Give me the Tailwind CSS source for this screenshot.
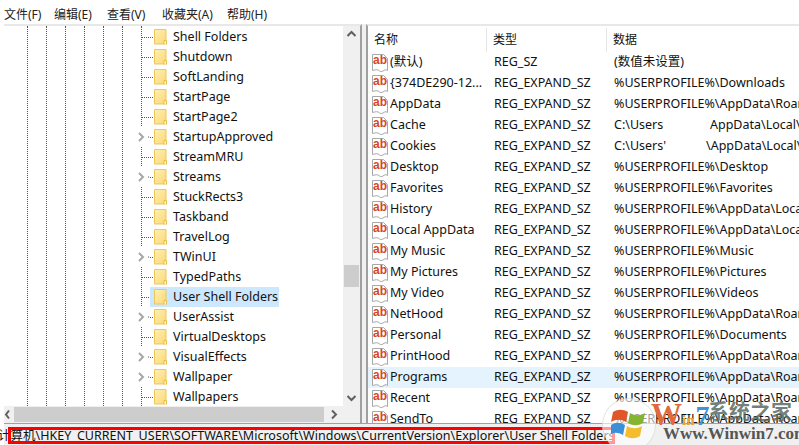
<!DOCTYPE html>
<html lang="zh">
<head>
<meta charset="utf-8">
<script src="https://cdn.jsdelivr.net/npm/@tailwindcss/browser@4"></script>
</head>
<body class="bg-white">
<svg class="absolute w-0 h-0">
  <defs>
    <linearGradient id="fg" x1="0" y1="0" x2="1" y2="1"><stop offset="0" stop-color="#fff0b4"/><stop offset="1" stop-color="#fbd873"/></linearGradient>
    <symbol id="folder" viewBox="0 0 13 16">
      <path d="M.5.5h11.500v14.500H.5z" fill="url(#fg)" stroke="#eec65a"/>
      <path d="M10 15.500v-4h2.500v4" fill="#fff3c8" stroke="#e8bc48"/>
    </symbol>
    <symbol id="ab" viewBox="0 0 16 18">
      <path d="M.5.5h11l4 4v12c-2-1.500-3-.5-4.500.5s-3 .5-4-.5-3-1-6.500 0z" fill="#fff" stroke="#a8a8a8"/>
      <text x="8" y="10" text-anchor="middle" font-family="Liberation Sans" font-size="12" font-weight="700" fill="#d4472a">ab</text>
    </symbol>
  </defs>
</svg>
<div class="relative w-[799px] h-[445px] overflow-hidden flex flex-col bg-white text-[12.5px] text-[#111] font-['Noto_Sans','Noto_Sans_CJK_SC',sans-serif] leading-none">

  <nav class="h-[24px] shrink-0 flex items-center pl-[4px] pt-[6px] text-[12px] text-[#222]">
    <span class="w-[50px]">文件(F)</span>
    <span class="w-[53px]">编辑(E)</span>
    <span class="w-[55px]">查看(V)</span>
    <span class="w-[65px]">收藏夹(A)</span>
    <span>帮助(H)</span>
  </nav>

  <main class="flex flex-1 min-h-0 ml-[4px] bg-[#f0f0f0]">
    <section class="w-[358px] shrink-0 flex flex-col bg-white border-t-2 border-[#e8e8e8] border-r-2 border-r-[#a0a0a0]">
      <div class="flex flex-1 min-h-0">
        <div class="relative flex-1 min-w-0 overflow-hidden pt-[1px]">
          <div class="absolute inset-y-0 left-[23px] flex gap-[18px]">
            <i class="border-l border-dotted border-[#555]"></i><i class="border-l border-dotted border-[#555]"></i><i class="border-l border-dotted border-[#555]"></i><i class="border-l border-dotted border-[#555]"></i><i class="border-l border-dotted border-[#555]"></i><i class="border-l border-dotted border-[#555]"></i><i class="border-l border-dotted border-[#555]"></i>
          </div>
          <ul class="relative pl-[137px]">
            <li class="h-5 flex items-center"><i class="w-[12px] border-t border-dotted border-[#555]"></i><svg class="w-[13px] h-[16px] ml-[1px]"><use href="#folder"/></svg><span class="ml-[6px]">Shell Folders</span></li>
            <li class="h-5 flex items-center"><i class="w-[12px] border-t border-dotted border-[#555]"></i><svg class="w-[13px] h-[16px] ml-[1px]"><use href="#folder"/></svg><span class="ml-[6px]">Shutdown</span></li>
            <li class="h-5 flex items-center"><i class="w-[12px] border-t border-dotted border-[#555]"></i><svg class="w-[13px] h-[16px] ml-[1px]"><use href="#folder"/></svg><span class="ml-[6px]">SoftLanding</span></li>
            <li class="h-5 flex items-center"><i class="w-[12px] border-t border-dotted border-[#555]"></i><svg class="w-[13px] h-[16px] ml-[1px]"><use href="#folder"/></svg><span class="ml-[6px]">StartPage</span></li>
            <li class="h-5 flex items-center"><i class="w-[12px] border-t border-dotted border-[#555]"></i><svg class="w-[13px] h-[16px] ml-[1px]"><use href="#folder"/></svg><span class="ml-[6px]">StartPage2</span></li>
            <li class="h-5 flex items-center"><svg class="w-[12px] h-[20px] -ml-[3px] bg-white" viewBox="0 0 12 20"><path d="M1 6l4 4-4 4" fill="none" stroke="#a6a6a6" stroke-width="2"/><path d="M10 10h1" stroke="#555"/></svg><i class="w-[3px] border-t border-dotted border-[#555]"></i><svg class="w-[13px] h-[16px] ml-[1px]"><use href="#folder"/></svg><span class="ml-[6px]">StartupApproved</span></li>
            <li class="h-5 flex items-center"><i class="w-[12px] border-t border-dotted border-[#555]"></i><svg class="w-[13px] h-[16px] ml-[1px]"><use href="#folder"/></svg><span class="ml-[6px]">StreamMRU</span></li>
            <li class="h-5 flex items-center"><svg class="w-[12px] h-[20px] -ml-[3px] bg-white" viewBox="0 0 12 20"><path d="M1 6l4 4-4 4" fill="none" stroke="#a6a6a6" stroke-width="2"/><path d="M10 10h1" stroke="#555"/></svg><i class="w-[3px] border-t border-dotted border-[#555]"></i><svg class="w-[13px] h-[16px] ml-[1px]"><use href="#folder"/></svg><span class="ml-[6px]">Streams</span></li>
            <li class="h-5 flex items-center"><i class="w-[12px] border-t border-dotted border-[#555]"></i><svg class="w-[13px] h-[16px] ml-[1px]"><use href="#folder"/></svg><span class="ml-[6px]">StuckRects3</span></li>
            <li class="h-5 flex items-center"><i class="w-[12px] border-t border-dotted border-[#555]"></i><svg class="w-[13px] h-[16px] ml-[1px]"><use href="#folder"/></svg><span class="ml-[6px]">Taskband</span></li>
            <li class="h-5 flex items-center"><i class="w-[12px] border-t border-dotted border-[#555]"></i><svg class="w-[13px] h-[16px] ml-[1px]"><use href="#folder"/></svg><span class="ml-[6px]">TravelLog</span></li>
            <li class="h-5 flex items-center"><svg class="w-[12px] h-[20px] -ml-[3px] bg-white" viewBox="0 0 12 20"><path d="M1 6l4 4-4 4" fill="none" stroke="#a6a6a6" stroke-width="2"/><path d="M10 10h1" stroke="#555"/></svg><i class="w-[3px] border-t border-dotted border-[#555]"></i><svg class="w-[13px] h-[16px] ml-[1px]"><use href="#folder"/></svg><span class="ml-[6px]">TWinUI</span></li>
            <li class="h-5 flex items-center"><i class="w-[12px] border-t border-dotted border-[#555]"></i><svg class="w-[13px] h-[16px] ml-[1px]"><use href="#folder"/></svg><span class="ml-[6px]">TypedPaths</span></li>
            <li class="h-5 flex items-center"><i class="w-[12px] border-t border-dotted border-[#555]"></i><div class="flex items-center h-5 bg-[#cce8ff] -ml-[3px] pl-[4px] pr-[1px]"><svg class="w-[13px] h-[16px]"><use href="#folder"/></svg><span class="ml-[6px]">User Shell Folders</span></div></li>
            <li class="h-5 flex items-center"><svg class="w-[12px] h-[20px] -ml-[3px] bg-white" viewBox="0 0 12 20"><path d="M1 6l4 4-4 4" fill="none" stroke="#a6a6a6" stroke-width="2"/><path d="M10 10h1" stroke="#555"/></svg><i class="w-[3px] border-t border-dotted border-[#555]"></i><svg class="w-[13px] h-[16px] ml-[1px]"><use href="#folder"/></svg><span class="ml-[6px]">UserAssist</span></li>
            <li class="h-5 flex items-center"><i class="w-[12px] border-t border-dotted border-[#555]"></i><svg class="w-[13px] h-[16px] ml-[1px]"><use href="#folder"/></svg><span class="ml-[6px]">VirtualDesktops</span></li>
            <li class="h-5 flex items-center"><svg class="w-[12px] h-[20px] -ml-[3px] bg-white" viewBox="0 0 12 20"><path d="M1 6l4 4-4 4" fill="none" stroke="#a6a6a6" stroke-width="2"/><path d="M10 10h1" stroke="#555"/></svg><i class="w-[3px] border-t border-dotted border-[#555]"></i><svg class="w-[13px] h-[16px] ml-[1px]"><use href="#folder"/></svg><span class="ml-[6px]">VisualEffects</span></li>
            <li class="h-5 flex items-center"><svg class="w-[12px] h-[20px] -ml-[3px] bg-white" viewBox="0 0 12 20"><path d="M1 6l4 4-4 4" fill="none" stroke="#a6a6a6" stroke-width="2"/><path d="M10 10h1" stroke="#555"/></svg><i class="w-[3px] border-t border-dotted border-[#555]"></i><svg class="w-[13px] h-[16px] ml-[1px]"><use href="#folder"/></svg><span class="ml-[6px]">Wallpaper</span></li>
            <li class="h-5 flex items-center"><i class="w-[12px] border-t border-dotted border-[#555]"></i><svg class="w-[13px] h-[16px] ml-[1px]"><use href="#folder"/></svg><span class="ml-[6px]">Wallpapers</span></li>
          </ul>
        </div>
        <div class="w-[17px] shrink-0 flex flex-col items-center bg-[#f0f0f0]">
          <svg class="w-[17px] h-[17px] shrink-0" viewBox="0 0 17 17"><path d="M4.500 10l4-4 4 4" fill="none" stroke="#606060" stroke-width="2"/></svg>
          <div class="flex-1 w-full pt-[222px]"><div class="h-[22px] w-[15px] mx-auto bg-[#cdcdcd]"></div></div>
          <svg class="w-[17px] h-[17px] shrink-0" viewBox="0 0 17 17"><path d="M4.500 7l4 4 4-4" fill="none" stroke="#606060" stroke-width="2"/></svg>
        </div>
      </div>
      <div class="h-[17px] shrink-0 flex items-center bg-[#f0f0f0]">
        <svg class="w-[10px] h-[17px] shrink-0" viewBox="0 0 10 17"><path d="M5 4.500l-3 4 3 4" fill="none" stroke="#606060" stroke-width="2"/></svg>
        <div class="w-[310px] h-[15px] bg-[#cdcdcd]"></div>
        <div class="flex-1"></div>
        <svg class="w-[17px] h-[17px] shrink-0 mr-[17px]" viewBox="0 0 17 17"><path d="M6 4.500l4 4-4 4" fill="none" stroke="#606060" stroke-width="2"/></svg>
      </div>
    </section>

    <section class="ml-[4px] flex-1 min-w-0 bg-white border-t-2 border-t-[#e8e8e8] border-l-2 border-l-[#a0a0a0] overflow-hidden">
      <header class="h-[26px] flex items-center text-[12px] pt-[2px]">
        <span class="w-[119px] shrink-0 h-full pl-[6px] flex items-center border-r border-[#e5e5e5]">名称</span>
        <span class="w-[120px] shrink-0 h-full pl-[6px] flex items-center border-r border-[#e5e5e5]">类型</span>
        <span class="pl-[6px]">数据</span>
      </header>
      <ul>
        <li class="h-[21px] flex items-center whitespace-nowrap"><div class="w-[119px] shrink-0 flex items-center pl-[4px] overflow-hidden"><svg class="w-[16px] h-[18px] shrink-0"><use href="#ab"/></svg><span class="ml-[2px]">(默认)</span></div><span class="w-[120px] shrink-0 pl-[7px]">REG_SZ</span><span class="pl-[7px]">(数值未设置)</span></li>
        <li class="h-[21px] flex items-center whitespace-nowrap"><div class="w-[119px] shrink-0 flex items-center pl-[4px] overflow-hidden"><svg class="w-[16px] h-[18px] shrink-0"><use href="#ab"/></svg><span class="ml-[2px]">{374DE290-12...</span></div><span class="w-[120px] shrink-0 pl-[7px]">REG_EXPAND_SZ</span><span class="pl-[7px]">%USERPROFILE%\Downloads</span></li>
        <li class="h-[21px] flex items-center whitespace-nowrap"><div class="w-[119px] shrink-0 flex items-center pl-[4px] overflow-hidden"><svg class="w-[16px] h-[18px] shrink-0"><use href="#ab"/></svg><span class="ml-[2px]">AppData</span></div><span class="w-[120px] shrink-0 pl-[7px]">REG_EXPAND_SZ</span><span class="pl-[7px]">%USERPROFILE%\AppData\Roaming</span></li>
        <li class="h-[21px] flex items-center whitespace-nowrap"><div class="w-[119px] shrink-0 flex items-center pl-[4px] overflow-hidden"><svg class="w-[16px] h-[18px] shrink-0"><use href="#ab"/></svg><span class="ml-[2px]">Cache</span></div><span class="w-[120px] shrink-0 pl-[7px]">REG_EXPAND_SZ</span><span class="pl-[7px] w-[103px] shrink-0">C:\Users</span><span>AppData\Local\Microsoft</span></li>
        <li class="h-[21px] flex items-center whitespace-nowrap"><div class="w-[119px] shrink-0 flex items-center pl-[4px] overflow-hidden"><svg class="w-[16px] h-[18px] shrink-0"><use href="#ab"/></svg><span class="ml-[2px]">Cookies</span></div><span class="w-[120px] shrink-0 pl-[7px]">REG_EXPAND_SZ</span><span class="pl-[7px] w-[99px] shrink-0">C:\Users'</span><span>\AppData\Local\Microsoft</span></li>
        <li class="h-[21px] flex items-center whitespace-nowrap"><div class="w-[119px] shrink-0 flex items-center pl-[4px] overflow-hidden"><svg class="w-[16px] h-[18px] shrink-0"><use href="#ab"/></svg><span class="ml-[2px]">Desktop</span></div><span class="w-[120px] shrink-0 pl-[7px]">REG_EXPAND_SZ</span><span class="pl-[7px]">%USERPROFILE%\Desktop</span></li>
        <li class="h-[21px] flex items-center whitespace-nowrap"><div class="w-[119px] shrink-0 flex items-center pl-[4px] overflow-hidden"><svg class="w-[16px] h-[18px] shrink-0"><use href="#ab"/></svg><span class="ml-[2px]">Favorites</span></div><span class="w-[120px] shrink-0 pl-[7px]">REG_EXPAND_SZ</span><span class="pl-[7px]">%USERPROFILE%\Favorites</span></li>
        <li class="h-[21px] flex items-center whitespace-nowrap"><div class="w-[119px] shrink-0 flex items-center pl-[4px] overflow-hidden"><svg class="w-[16px] h-[18px] shrink-0"><use href="#ab"/></svg><span class="ml-[2px]">History</span></div><span class="w-[120px] shrink-0 pl-[7px]">REG_EXPAND_SZ</span><span class="pl-[7px]">%USERPROFILE%\AppData\Local</span></li>
        <li class="h-[21px] flex items-center whitespace-nowrap"><div class="w-[119px] shrink-0 flex items-center pl-[4px] overflow-hidden"><svg class="w-[16px] h-[18px] shrink-0"><use href="#ab"/></svg><span class="ml-[2px]">Local AppData</span></div><span class="w-[120px] shrink-0 pl-[7px]">REG_EXPAND_SZ</span><span class="pl-[7px]">%USERPROFILE%\AppData\Local</span></li>
        <li class="h-[21px] flex items-center whitespace-nowrap"><div class="w-[119px] shrink-0 flex items-center pl-[4px] overflow-hidden"><svg class="w-[16px] h-[18px] shrink-0"><use href="#ab"/></svg><span class="ml-[2px]">My Music</span></div><span class="w-[120px] shrink-0 pl-[7px]">REG_EXPAND_SZ</span><span class="pl-[7px]">%USERPROFILE%\Music</span></li>
        <li class="h-[21px] flex items-center whitespace-nowrap"><div class="w-[119px] shrink-0 flex items-center pl-[4px] overflow-hidden"><svg class="w-[16px] h-[18px] shrink-0"><use href="#ab"/></svg><span class="ml-[2px]">My Pictures</span></div><span class="w-[120px] shrink-0 pl-[7px]">REG_EXPAND_SZ</span><span class="pl-[7px]">%USERPROFILE%\Pictures</span></li>
        <li class="h-[21px] flex items-center whitespace-nowrap"><div class="w-[119px] shrink-0 flex items-center pl-[4px] overflow-hidden"><svg class="w-[16px] h-[18px] shrink-0"><use href="#ab"/></svg><span class="ml-[2px]">My Video</span></div><span class="w-[120px] shrink-0 pl-[7px]">REG_EXPAND_SZ</span><span class="pl-[7px]">%USERPROFILE%\Videos</span></li>
        <li class="h-[21px] flex items-center whitespace-nowrap"><div class="w-[119px] shrink-0 flex items-center pl-[4px] overflow-hidden"><svg class="w-[16px] h-[18px] shrink-0"><use href="#ab"/></svg><span class="ml-[2px]">NetHood</span></div><span class="w-[120px] shrink-0 pl-[7px]">REG_EXPAND_SZ</span><span class="pl-[7px]">%USERPROFILE%\AppData\Roaming</span></li>
        <li class="h-[21px] flex items-center whitespace-nowrap"><div class="w-[119px] shrink-0 flex items-center pl-[4px] overflow-hidden"><svg class="w-[16px] h-[18px] shrink-0"><use href="#ab"/></svg><span class="ml-[2px]">Personal</span></div><span class="w-[120px] shrink-0 pl-[7px]">REG_EXPAND_SZ</span><span class="pl-[7px]">%USERPROFILE%\Documents</span></li>
        <li class="h-[21px] flex items-center whitespace-nowrap"><div class="w-[119px] shrink-0 flex items-center pl-[4px] overflow-hidden"><svg class="w-[16px] h-[18px] shrink-0"><use href="#ab"/></svg><span class="ml-[2px]">PrintHood</span></div><span class="w-[120px] shrink-0 pl-[7px]">REG_EXPAND_SZ</span><span class="pl-[7px]">%USERPROFILE%\AppData\Roaming</span></li>
        <li class="h-[21px] flex items-center whitespace-nowrap bg-[#e5f3ff]"><div class="w-[119px] shrink-0 flex items-center pl-[4px] overflow-hidden"><svg class="w-[16px] h-[18px] shrink-0"><use href="#ab"/></svg><span class="ml-[2px]">Programs</span></div><span class="w-[120px] shrink-0 pl-[7px]">REG_EXPAND_SZ</span><span class="pl-[7px]">%USERPROFILE%\AppData\Roaming</span></li>
        <li class="h-[21px] flex items-center whitespace-nowrap"><div class="w-[119px] shrink-0 flex items-center pl-[4px] overflow-hidden"><svg class="w-[16px] h-[18px] shrink-0"><use href="#ab"/></svg><span class="ml-[2px]">Recent</span></div><span class="w-[120px] shrink-0 pl-[7px]">REG_EXPAND_SZ</span><span class="pl-[7px]">%USERPROFILE%\AppData\Roaming</span></li>
        <li class="h-[21px] flex items-center whitespace-nowrap"><div class="w-[119px] shrink-0 flex items-center pl-[4px] overflow-hidden"><svg class="w-[16px] h-[18px] shrink-0"><use href="#ab"/></svg><span class="ml-[2px]">SendTo</span></div><span class="w-[120px] shrink-0 pl-[7px]">REG_EXPAND_SZ</span><span class="pl-[7px]">%USERPROFILE%\AppData\Roaming</span></li>
      </ul>
    </section>
  </main>

  <footer class="h-[22px] shrink-0 ml-[4px] flex items-center bg-[#f0f0f0] border-t border-[#a0a0a0] whitespace-nowrap pt-[4px] text-[12.5px] tracking-[0.02px]">
    <span class="-ml-[6px]">计算机\HKEY_CURRENT_USER\SOFTWARE\Microsoft\Windows\CurrentVersion\Explorer\User Shell Folders</span>
  </footer>

  <div class="absolute left-[8px] top-[427px] w-[607px] h-[17px] border-[3px] border-[#ff0000]"></div>

  <div class="absolute left-[600px] top-[396px] w-[199px] h-[49px] overflow-hidden">
    <div class="absolute left-[2px] top-[2px] w-[54px] h-[54px] rounded-full bg-white/60 border border-[#d0d0d0]/60"></div>
    <svg class="absolute left-[11px] top-[11px] w-[36px] h-[32px]" viewBox="0 0 36 32">
      <path d="M2 5c5-3 10-3 15 0l-2 10c-5-3-10-3-15 0z" fill="#e0552a"/>
      <path d="M19 6c5 3 10 3 15 0l-2 10c-5 3-10 3-15 0z" fill="#84b530"/>
      <path d="M0 18c5-3 9-3 14 0l-2 10c-5-3-9-3-14 0z" fill="#3a8fd8"/>
      <path d="M16 19c5 3 10 3 15 0l-2 10c-5 3-10 3-15 0z" fill="#f3bd2e"/>
    </svg>
    <div class="absolute left-[51px] top-[3px] flex items-baseline font-['Liberation_Serif'] font-bold leading-none">
      <span class="text-[31px] text-[#e06a3c]">W</span><span class="text-[15px] text-[#e8a33a]">in</span><span class="text-[28px] text-[#3f93d6] ml-[1px]">7</span>
    </div>
    <span class="absolute left-[108px] top-[4px] text-[21px] leading-none font-bold text-[#5a6a64]/85 font-['Noto_Sans_CJK_SC']">系统之家</span>
    <span class="absolute left-[63px] top-[29px] text-[17px] leading-none font-bold text-[#555] font-['Liberation_Serif']">Www.Winwin7.com</span>
  </div>
</div>
</body>
</html>
